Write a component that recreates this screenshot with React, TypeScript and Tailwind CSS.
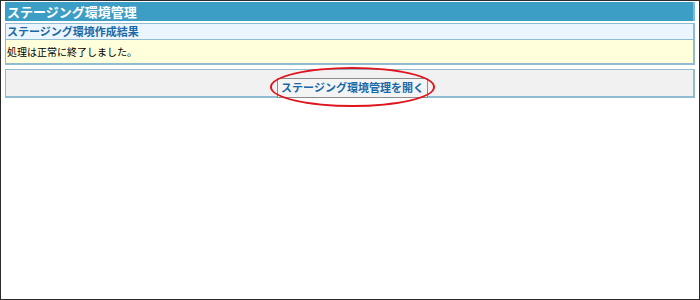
const font = { fontFamily: '"Noto Sans CJK JP", "Noto Sans", sans-serif' };

export default function App() {
  return (
    <div
      className="w-[700px] h-[300px] border border-[#2b2b2b] bg-white box-border pt-px px-[4px]"
      style={font}
    >
      <div className="h-[19px] bg-[#3c9ec4] border-r-2 border-[#7cbdd6] flex items-center px-[2px] text-white font-bold text-[13px] leading-none">
        ステージング環境管理
      </div>
      <div className="mt-[2px] border border-[#8fbcd0] border-r-2 border-b-2">
        <div className="h-[16px] bg-[#ebf5fd] border-b border-[#8fbcd0] flex items-center px-[1px] text-[11px] font-bold text-[#1a68a6] leading-none">
          ステージング環境作成結果
        </div>
        <div className="h-[23px] bg-[#ffffdc] flex items-center px-[1px] text-[10px] text-black leading-none">
          処理は正常に終了しました。
        </div>
      </div>
      <div className="mt-[4px] h-[29px] bg-[#f1f1f1] border border-[#8fbcd0] border-r-2 border-b-2 flex items-start justify-center pt-[3px]">
        <div className="relative ml-[6px]">
          <button className="h-[20px] px-[3px] border border-[#8c8c8c] bg-[#f4f4f4] text-[11px] font-bold text-[#1769aa] leading-none">
            ステージング環境管理を開く
          </button>
          <div className="absolute left-[-7px] right-[-7px] top-[-6px] bottom-[-9px] rounded-[50%] border-2 border-[#e0141c] pointer-events-none" />
        </div>
      </div>
    </div>
  );
}
